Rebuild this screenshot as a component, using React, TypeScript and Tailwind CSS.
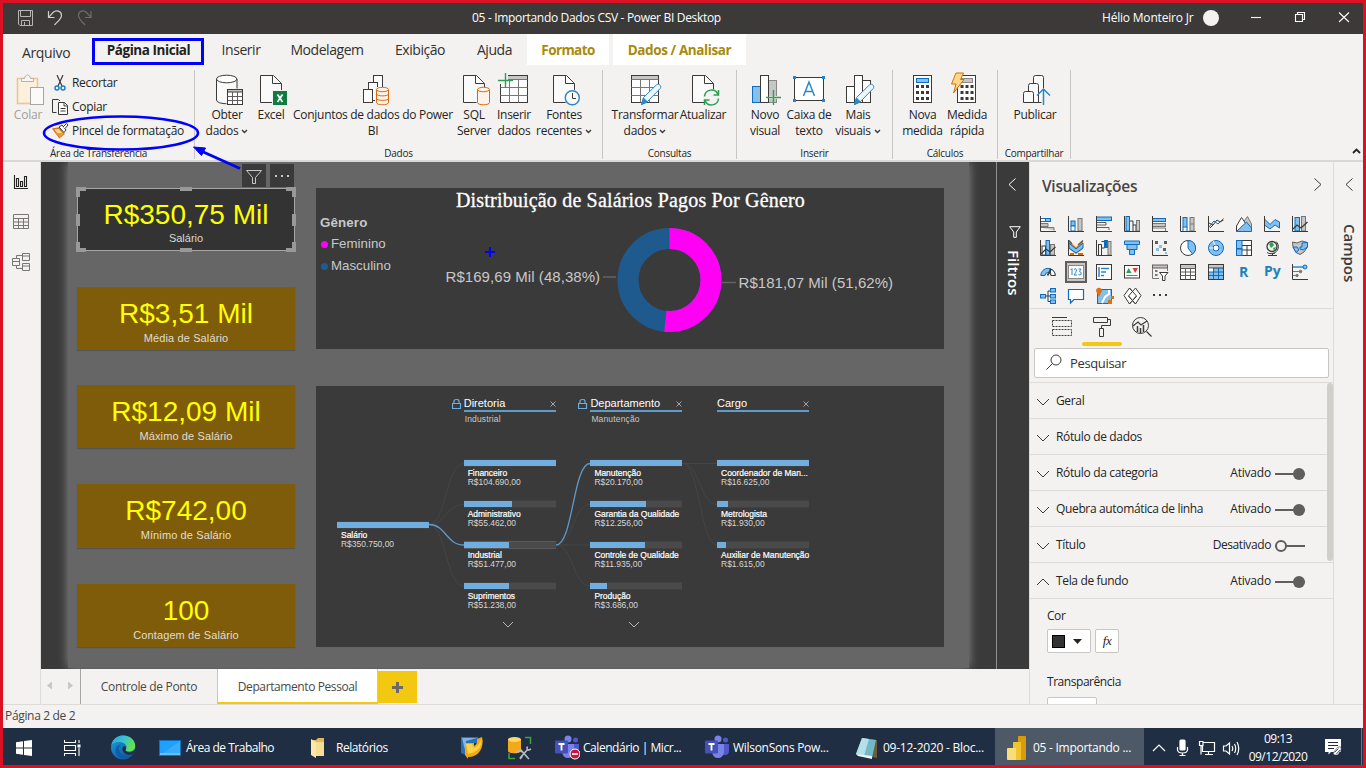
import React from "react";

type Kids = { children?: React.ReactNode };

const UI = "font-['Open_Sans','Noto_Sans',sans-serif]";
const ARIAL = "font-['Liberation_Sans',Arial,sans-serif]";

const K = "#3b3a39";
const B = "#0f6cbd";
const L = "#83c0ee";
const G = "#c8c6c4";

/* ---------- ribbon icons (32 x 32) ---------- */

const Ico = ({ children }: Kids) => (
  <svg width="32" height="32" viewBox="0 0 32 32" fill="none" stroke={K} strokeWidth="1" className="block shrink-0 overflow-visible">
    {children}
  </svg>
);

const Page = () => (
  <>
    <path d="M5.5 1.5H18.5L26.5 9.5V28.5H5.5Z" fill="#fafafa" />
    <path d="M17.5 1.5V9.5H26" fill="#fff" />
  </>
);

const OrangeCylinder = () => (
  <g stroke="#d86a0a" fill="#fdf3ea">
    <path d="M19.5 16V28.5C19.5 31.5 31.5 31.5 31.5 28.5V16" />
    <ellipse cx="25.5" cy="15.5" rx="6" ry="2.2" />
  </g>
);

const Pencil = () => (
  <g stroke="#2b88c8">
    <path d="M12.5 30.5L14.5 23.5L27.5 10.8C30 9 33 12 31.2 14.5L18.5 27.5Z" fill="#eef6fc" />
    <path d="M12.5 30.5L14.5 24L18.5 28Z" fill="#2b88c8" />
  </g>
);

const Table = () => (
  <>
    <rect x="2.5" y="1.5" width="27" height="27" fill="#fff" />
    <rect x="3" y="2" width="26" height="3.5" fill={G} stroke="none" />
    <path d="M2.5 5.5H29.5M2.5 13.5H29.5M2.5 21.5H29.5M11.5 5.5V28.5M20.5 5.5V28.5" stroke="#777" />
  </>
);

const PlusAt = ({ x, y }: { x: number; y: number }) => (
  <path d={`M${x - 7.5} ${y}H${x + 7.5}M${x} ${y - 7.5}V${y + 7.5}`} stroke="#2f9e55" strokeWidth="1.4" />
);

const Dots = ({ x }: { x: number }) => (
  <g fill={K} stroke="none">
    {[11, 17, 23].map((y) => [0, 5, 10].map((d) => <rect key={`${y}-${d}`} x={x + d} y={y} width="3" height="3" />))}
  </g>
);

const GetData = () => (
  <Ico>
    <path d="M5.500 5V26C5.500 31 26 31 26 26V5" fill="#fafafa" />
    <ellipse cx="15.700" cy="5" rx="10.200" ry="3.800" fill="#fff" />
    <rect x="15.500" y="14.500" width="17" height="17" fill="#f3f2f1" stroke="none" />
    <rect x="16.500" y="15.500" width="15" height="15" fill="#fff" />
    <rect x="16.500" y="15.500" width="15" height="2.500" fill={G} />
    <path d="M16.500 22.500H31.500M16.500 26.500H31.500M21.500 18V30.500M26.500 18V30.500" stroke="#605e5c" />
  </Ico>
);
const Excel = () => (
  <Ico>
    <Page />
    <rect x="17" y="16" width="15" height="15" fill="#f3f2f1" stroke="none" />
    <rect x="18" y="17" width="14" height="14" fill="#107c41" stroke="none" />
    <path d="M22.500 20.500L27.500 28M27.500 20.500L22.500 28" stroke="#fff" strokeWidth="1.800" />
  </Ico>
);
const Datasets = () => (
  <Ico>
    <g fill="#fff">
      <rect x="16.500" y="1.500" width="9" height="20" />
      <rect x="11.500" y="8.500" width="9" height="18" />
      <rect x="6.500" y="15.500" width="9" height="13" />
    </g>
    <path d="M18 13H33V32H18Z" fill="#f3f2f1" stroke="none" />
    <OrangeCylinder />
    <path d="M19.500 20C19.500 22.500 31.500 22.500 31.500 20M19.500 24.500C19.500 27 31.500 27 31.500 24.500" stroke="#d86a0a" />
  </Ico>
);
const Sql = () => (
  <Ico>
    <Page />
    <path d="M18.500 13H32V32H18.500Z" fill="#f3f2f1" stroke="none" />
    <OrangeCylinder />
  </Ico>
);
const EnterData = () => (
  <Ico>
    <Table />
    <path d="M-1 -2H10V10H-1Z" fill="#f3f2f1" stroke="none" />
    <PlusAt x={7.5} y={6.5} />
  </Ico>
);
const Recent = () => (
  <Ico>
    <Page />
    <circle cx="24.300" cy="23.700" r="8.300" fill="#f3f2f1" stroke="none" />
    <circle cx="24.300" cy="23.700" r="7" stroke="#2b88c8" strokeWidth="1.400" fill="#fafafa" />
    <path d="M24.500 19V24.500H28" />
  </Ico>
);
const Transform = () => (
  <Ico>
    <Table />
    <Pencil />
  </Ico>
);
const Refresh = () => (
  <Ico>
    <Page />
    <circle cx="24.500" cy="23.500" r="8.500" fill="#f3f2f1" stroke="none" />
    <g stroke="#2f9e55" strokeWidth="1.500">
      <path d="M17.500 22.500A7 7 0 0 1 31 20.500M31.500 16V21H26.500" />
      <path d="M31.500 24.500A7 7 0 0 1 18 26.500M17.500 31V26H22.500" />
    </g>
  </Ico>
);
const NewVisual = () => (
  <Ico>
    <rect x="19.500" y="6.500" width="8" height="22" fill={G} stroke="#8a8886" />
    <rect x="3.500" y="12.500" width="8" height="16" fill={L} stroke={B} />
    <rect x="11.500" y="1.500" width="8" height="27" fill="#fff" />
    <path d="M20 23.500H29" stroke="#f3f2f1" strokeWidth="3" />
    <PlusAt x={24.5} y={23.5} />
  </Ico>
);
const TextBox = () => (
  <Ico>
    <rect x="1.500" y="3.500" width="29" height="23" fill="#fff" />
    <path d="M10.500 22L16 8L21.500 22M12.500 17.500H19.500" stroke="#2b88c8" strokeWidth="1.500" />
    <g fill="#1f86d0" stroke="none">
      <rect x="0" y="2" width="3" height="3" />
      <rect x="29" y="2" width="3" height="3" />
      <rect x="0" y="25" width="3" height="3" />
      <rect x="29" y="25" width="3" height="3" />
    </g>
  </Ico>
);
const MoreVisuals = () => (
  <Ico>
    <g fill="#fff">
      <rect x="4.500" y="12.500" width="8" height="16" />
      <rect x="20.500" y="6.500" width="8" height="22" />
      <rect x="12.500" y="1.500" width="8" height="27" />
    </g>
    <Pencil />
  </Ico>
);
const NewMeasure = () => (
  <Ico>
    <rect x="6.500" y="1.500" width="18" height="27" fill="#fff" />
    <rect x="9.500" y="4.500" width="12" height="4" fill={L} stroke={B} />
    <Dots x={9} />
  </Ico>
);
const QuickMeasure = () => (
  <Ico>
    <rect x="6.500" y="1.500" width="18" height="27" fill="#fff" />
    <rect x="10.500" y="4.500" width="11" height="4" fill={G} stroke="#8a8886" />
    <Dots x={9.5} />
    <path d="M5 -1H12.500L9.500 5.500H13L2.500 19L5 10H0.500Z" fill="#ffd98a" stroke="#d86a0a" />
  </Ico>
);
const Publish = () => (
  <Ico>
    <g fill="#fafafa">
      <path d="M14.500 28.500V3.500Q14.500 1.500 16.500 1.500H22.500Q24.500 1.500 24.500 3.500V28.500Z" />
      <path d="M9.500 28.500V11.500Q9.500 9.500 11.500 9.500H17.500Q19.500 9.500 19.500 11.500V28.500Z" />
      <path d="M4.500 28.500V19.500Q4.500 17.500 6.500 17.500H12.500Q14.500 17.500 14.500 19.500V28.500Z" />
    </g>
    <path d="M22.500 14V32H27V14Z" fill="#f3f2f1" stroke="none" />
    <path d="M24.500 31V15M18 21.500L24.500 15L31 21.500" stroke="#2b88c8" strokeWidth="1.500" />
  </Ico>
);

/* ---------- ribbon ---------- */

const Caret = () => (
  <svg width="7" height="5" viewBox="0 0 7 5" className="ml-[3px] inline-block align-middle" fill="none" stroke="#3b3a39" strokeWidth="1.400">
    <path d="M1 1L3.500 3.500L6 1" />
  </svg>
);

const Btn = ({ w, icon, a, b, caret }: { w: string; icon: React.ReactNode; a: string; b?: string; caret?: boolean }) => (
  <div className={`${w} flex shrink-0 flex-col items-center`}>
    {icon}
    <div className="mt-px flex flex-col items-center text-[12px] leading-4 tracking-[-0.3px] whitespace-nowrap text-[#252423]">
      <span>{a}</span>
      {b && (
        <span>
          {b}
          {caret && <Caret />}
        </span>
      )}
    </div>
  </div>
);

const Group = ({ w, pad, label, children }: Kids & { w: string; pad: string; label: string }) => (
  <div className={`${w} flex h-[89px] flex-col border-r border-[#c8c6c4]`}>
    <div className={`flex h-[76px] shrink-0 ${pad}`}>{children}</div>
    <div className="text-center text-[10px] leading-[14px] tracking-[-0.25px] text-[#252423]">{label}</div>
  </div>
);

const Ribbon = () => (
  <div className="flex h-[128px] flex-col border-b-2 border-[#d8d8d8] bg-[#f3f2f1]">
    <div className="flex h-8 text-[14px] leading-[32px] tracking-[-0.45px] whitespace-nowrap text-[#323130]">
      <div className="w-[89px] pt-[3px] pl-[19px] tracking-[-0.350px]">Arquivo</div>
      <div className="mt-1 h-[27px] w-[112px] border-3 border-[#0000ff] pl-px text-center text-[13.500px] leading-[19px] font-bold tracking-[-0.450px] text-[#201f1e]">Página Inicial</div>
      <div className="w-[74px] text-center">Inserir</div>
      <div className="w-[98px] text-center">Modelagem</div>
      <div className="w-[88px] text-center">Exibição</div>
      <div className="w-[61px] text-center">Ajuda</div>
      <div className="ml-[2px] h-[31px] w-[82px] bg-white text-center text-[13.500px] font-bold tracking-[-0.600px] text-[#a88a0d]">Formato</div>
      <div className="ml-1 h-[31px] w-[133px] bg-white text-center text-[13.500px] font-bold tracking-[-0.400px] text-[#a88a0d]">Dados / Analisar</div>
    </div>
    <div className="flex pt-[4px]">
      <Group w="w-[192px]" pad="pt-[4px]" label="Área de Transferência">
        <div className="flex w-[50px] flex-col items-center">
          <svg width="32" height="32" viewBox="0 0 32 32" fill="none" className="block">
            <rect x="5.500" y="4.500" width="20" height="25" stroke="#ecc793" strokeWidth="1.600" fill="#faf0dc" />
            <path d="M9.500 7.500V4.500H12.500C13 0 18 0 18.500 4.500H21.500V7.500Z" fill="#f5f5f5" stroke="#b5b3b1" />
            <rect x="18.500" y="13.500" width="13" height="17" fill="#fafafa" stroke="#a8a6a4" />
          </svg>
          <span className="mt-px text-[12px] leading-4 tracking-[-0.200px] text-[#a19f9d]">Colar</span>
        </div>
        <div className="-ml-px flex flex-col text-[12px] leading-6 tracking-[-0.300px] whitespace-nowrap text-[#252423]">
          <div className="-mt-[3px] flex h-6 items-center">
            <svg width="17" height="16" viewBox="0 0 17 16" fill="none" className="mr-[3px]">
              <path d="M5 0L10 11M11 0L6 11" stroke={K} strokeWidth="1.200" />
              <circle cx="5" cy="13" r="2" stroke="#1a7fc4" strokeWidth="1.500" />
              <circle cx="11" cy="13" r="2" stroke="#1a7fc4" strokeWidth="1.500" />
            </svg>
            Recortar
          </div>
          <div className="flex h-6 items-center">
            <svg width="17" height="16" viewBox="0 0 17 16" fill="none" stroke={K} className="mr-[3px]">
              <path d="M4.500 13.500H0.500V0.500H6.500L8 2" />
              <path d="M6.500 3.500H12.500L15.500 6.500V15.500H6.500Z" fill="#fff" />
              <path d="M12 3.500V7H15.500M8.500 9.500H13.500M8.500 12H13.500" />
            </svg>
            Copiar
          </div>
          <div className="flex h-6 items-center">
            <svg width="17" height="16" viewBox="0 0 17 16" fill="none" className="mr-[3px]">
              <path d="M1 6L7 5L12 11L7.500 14.500Z" fill="#fbd49a" stroke="#d8780f" strokeWidth="1.300" />
              <path d="M4 10L8 14L12 11L9 10Z" fill="#ee9a2c" />
              <path d="M7 4L10 2L14 7L12 9.500Z" fill="#fff" stroke={K} />
              <path d="M11 4L14.500 0.500L16 2L13 5.500" fill="#fff" stroke={K} />
            </svg>
            Pincel de formatação
          </div>
        </div>
      </Group>
      <Group w="w-[408px]" pad="pt-[4px] pl-[6px]" label="Dados">
        <Btn w="w-[52px]" icon={<GetData />} a="Obter" b="dados" caret />
        <Btn w="w-[36px]" icon={<Excel />} a="Excel" />
        <Btn w="w-[168px]" icon={<Datasets />} a="Conjuntos de dados do Power" b="BI" />
        <Btn w="w-[34px]" icon={<Sql />} a="SQL" b="Server" />
        <Btn w="w-[46px]" icon={<EnterData />} a="Inserir" b="dados" />
        <Btn w="w-[54px]" icon={<Recent />} a="Fontes" b="recentes" caret />
      </Group>
      <Group w="w-[134px]" pad="pt-[4px] pl-[9px]" label="Consultas">
        <Btn w="w-[66px]" icon={<Transform />} a="Transformar" b="dados" caret />
        <Btn w="w-[50px]" icon={<Refresh />} a="Atualizar" />
      </Group>
      <Group w="w-[156px]" pad="pt-[4px] pl-[6px]" label="Inserir">
        <Btn w="w-[44px]" icon={<NewVisual />} a="Novo" b="visual" />
        <Btn w="w-[44px]" icon={<TextBox />} a="Caixa de" b="texto" />
        <Btn w="w-[54px]" icon={<MoreVisuals />} a="Mais" b="visuais" caret />
      </Group>
      <Group w="w-[105px]" pad="pt-[4px] pl-[7px]" label="Cálculos">
        <Btn w="w-[45px]" icon={<NewMeasure />} a="Nova" b="medida" />
        <Btn w="w-[44px]" icon={<QuickMeasure />} a="Medida" b="rápida" />
      </Group>
      <Group w="w-[73px]" pad="pt-[4px] pl-[15px]" label="Compartilhar">
        <Btn w="w-[44px]" icon={<Publish />} a="Publicar" />
      </Group>
      <div className="flex grow items-end justify-end pr-[2px] pb-[5px]">
        <svg width="9" height="6" viewBox="0 0 9 6" fill="none" stroke="#252423" strokeWidth="1.800">
          <path d="M1 5L4.500 1.500L8 5" />
        </svg>
      </div>
    </div>
  </div>
);

const TitleBar = () => (
  <div className="flex h-[31px] items-center bg-[#3b3a38] pb-[2px] text-[12px] text-white">
    <svg width="90" height="31" viewBox="3 3 90 31" fill="none" className="shrink-0">
      <g stroke="#b8b6b4">
        <path d="M18.500 11.500H32.500V26.500H20L18.500 25Z" />
        <path d="M20.500 11.500V17.500H30.500V11.500M21.500 26V21.500H29.500V26M24.500 23V26" />
      </g>
      <path d="M48.500 12V18.500H54.500M48.800 18.200L53 13.500C56 10.500 61.500 12 61.500 16.500C61.500 20 57 23 54.500 26" stroke="#d0cecc" strokeWidth="1.200" />
      <path d="M91 12V18.500H85M90.800 18.200L86.500 13.500C83.500 10.500 78.500 12 78.500 16.500C78.500 20 82.500 23 85 26" stroke="#6e6d6b" strokeWidth="1.200" />
    </svg>
    <div className="w-[1009px] pl-[379px] tracking-[-0.320px] whitespace-nowrap">05 - Importando Dados CSV - Power BI Desktop</div>
    <div className="w-[92px] tracking-[-0.200px] whitespace-nowrap">Hélio Monteiro Jr</div>
    <div className="ml-[9px] h-4 w-4 rounded-full bg-[#f3f2f1]" />
    <svg width="144" height="31" viewBox="1219 3 144 31" fill="none" stroke="#fff" strokeWidth="1.100" className="shrink-0">
      <path d="M1251 18.500H1261" />
      <path d="M1295.500 15.500H1302.500V22.500H1295.500ZM1297.500 15.500V13.500H1304.500V20.500H1302.500" />
      <path d="M1339 13.500L1349 23M1349 13.500L1339 23" />
    </svg>
  </div>
);

/* ---------- report canvas ---------- */

const Card = ({ h, value, label }: { h: string; value: string; label: string }) => (
  <div className={`${h} flex w-[218px] flex-col items-center bg-[#7f5c09] whitespace-nowrap shadow-[0_1px_1px_rgba(60,60,60,.4)]`}>
    <div className="pt-[10px] text-[28px] leading-[34px] text-[#ffff00]">{value}</div>
    <div className="text-[11px] leading-[14px] tracking-[0.120px] text-[#e0dcd2]">{label}</div>
  </div>
);

const SelectedCard = () => (
  <div className="relative flex h-[63px] w-[218px] flex-col items-center border border-[#a6a6a6] bg-[#333333] whitespace-nowrap">
    <div className="pt-[9px] text-[28px] leading-[33px] text-[#ffff00]">R$350,75 Mil</div>
    <div className="text-[11px] leading-[14px] text-[#d8d8d8]">Salário</div>
    <svg width="220" height="65" viewBox="0 0 220 65" className="absolute -top-[2px] -left-[2px]" fill="#999">
      <path d="M0 0H10V4H4V10H0ZM220 0H210V4H216V10H220ZM0 65H10V61H4V55H0ZM220 65H210V61H216V55H220Z" />
      <path d="M104 0H116V4H104ZM104 61H116V65H104ZM0 27H4V39H0ZM216 27H220V39H216Z" />
    </svg>
    <div className="absolute top-[-25px] left-[164px] flex gap-1">
      <div className="h-[23px] w-6 bg-[#3a3a3a]">
        <svg width="24" height="23" viewBox="0 0 24 23" fill="none" stroke="#c8c8c8">
          <path d="M4.500 6.500H19.500L13.500 13.500V19.500H10.500V13.500Z" />
        </svg>
      </div>
      <div className="h-[23px] w-6 bg-[#3a3a3a]">
        <svg width="24" height="23" viewBox="0 0 24 23" fill="#c8c8c8">
          <path d="M5 11h2v2h-2zM11 11h2v2h-2zM17 11h2v2h-2z" />
        </svg>
      </div>
    </div>
  </div>
);

const DonutVisual = () => (
  <div className="relative h-[161px] w-[628px] bg-[#3a3a3a] text-[#c8c8c8]">
    <div className="pl-px text-center font-['Liberation_Serif',serif] text-[20px] leading-[24px] tracking-[0.180px] whitespace-nowrap text-white [-webkit-text-stroke:0.3px_white]">Distribuição de Salários Pagos Por Gênero</div>
    <div className="flex flex-col pl-[4px] text-[13.300px] leading-[22px]">
      <div className="font-bold tracking-[0.150px]">Gênero</div>
      <div className="-mt-px flex items-center pl-px">
        <i className="mr-[3px] h-[7px] w-[7px] rounded-full bg-[#ff00f5]" />
        Feminino
      </div>
      <div className="flex items-center pl-px">
        <i className="mr-[3px] h-[7px] w-[7px] rounded-full bg-[#1f5a8f]" />
        Masculino
      </div>
    </div>
    <svg width="628" height="161" viewBox="316 188 628 161" className="absolute top-0 left-0" fill="none">
      <g transform="rotate(-90 669.500 280)" strokeWidth="21">
        <circle cx="669.500" cy="280" r="41.500" stroke="#1f5a8f" />
        <circle cx="669.500" cy="280" r="41.500" stroke="#ff00f5" pathLength="100" strokeDasharray="51.620 48.380" />
      </g>
      <path d="M603 277H616M722 282.500H736" stroke="#636363" strokeWidth="1.500" />
      <path d="M485 252H495M490 247V257" stroke="#0000ff" strokeWidth="2" />
    </svg>
    <span className="absolute top-[80px] left-[129.500px] text-[15px] leading-[18px] tracking-[0.060px] whitespace-nowrap">R$169,69 Mil (48,38%)</span>
    <span className="absolute top-[86px] left-[422.500px] text-[15px] leading-[18px] tracking-[0.060px] whitespace-nowrap">R$181,07 Mil (51,62%)</span>
  </div>
);

const Node = ({ name, value, pct, hot }: { name: string; value: string; pct: number; hot?: boolean }) => (
  <div className="flex h-[41px] flex-col whitespace-nowrap">
    <div className={`h-[8px] w-[92px] border-y ${hot ? "border-[#5a5a5a]" : "border-[#414141]"} bg-[#4a4a4a]`}>
      <div className="h-full bg-[#70aee0]" style={{ width: `${pct}%` }} />
    </div>
    <div className="pl-[4px] text-[8.500px] leading-[9px] tracking-[-0.030px] text-white">
      <div className="pt-[2px] [-webkit-text-stroke:0.2px_white]">{name}</div>
      <div className="text-[#d6d6d6]">{value}</div>
    </div>
  </div>
);

const Lock = () => (
  <svg width="10" height="12" viewBox="0 0 10 12" fill="none" stroke="#70aee0" className="absolute top-[1px] -left-[12px]">
    <path d="M.5 5.500H8.500V10.500H.5ZM2 5.500V3Q2 1.500 4.500 1.500Q7 1.500 7 3V5.500" strokeWidth="1.200" />
  </svg>
);

const TreeHead = ({ title, sub, lock }: { title: string; sub?: string; lock?: boolean }) => (
  <div className="relative h-[62px] whitespace-nowrap">
    {lock && <Lock />}
    <div className="flex h-[15px] items-center justify-between border-b-2 border-[#5e9ccc] text-[11px] leading-[13px] text-white">
      <span>{title}</span>
      <svg width="6" height="6" viewBox="0 0 6 6" stroke="#b0b0b0" strokeWidth=".9">
        <path d="M.5 .5L5.500 5.500M5.500 .5L.5 5.500" />
      </svg>
    </div>
    <div className="mt-[3px] pl-px text-[8.500px] leading-[9px] tracking-[0.150px] text-[#c8c8c8]">{sub}</div>
  </div>
);

const Down = () => (
  <svg width="12" height="7" viewBox="0 0 12 7" fill="none" stroke="#b8b8b8" className="-mt-[2px] ml-[38px]">
    <path d="M1 1L6 6L11 1" />
  </svg>
);

const TreeVisual = () => (
  <div className="relative mt-[37px] h-[261px] w-[628px] bg-[#3a3a3a]">
    <svg width="628" height="261" viewBox="316 386 628 261" className="absolute top-0 left-0" fill="none">
      <g stroke="#454545">
        <path d="M429 524.500C446 524.500 446 463.500 464 463.500M429 524.500C446 524.500 446 504.500 464 504.500M429 524.500C446 524.500 446 586 464 586" />
        <path d="M556 545C573 545 573 504.500 590 504.500M556 545H590M556 545C573 545 573 586 590 586" />
        <path d="M682 463.500H717M682 463.500C700 463.500 700 504.500 717 504.500M682 463.500C700 463.500 700 545 717 545" />
      </g>
      <path d="M429 524.500C446 524.500 446 545 464 545M556 545C573 545 573 463.500 590 463.500" stroke="#5f99c8" strokeWidth="1.300" />
    </svg>
    <div className="relative flex gap-[34.700px] pt-[11px] pl-[21px]">
      <div className="w-[92px] pt-[123.500px]">
        <Node name="Salário" value="R$350.750,00" pct={100} />
      </div>
      <div className="w-[92px]">
        <TreeHead title="Diretoria" sub="Industrial" lock />
        <Node name="Financeiro" value="R$104.690,00" pct={100} />
        <Node name="Administrativo" value="R$55.462,00" pct={53} />
        <Node name="Industrial" value="R$51.477,00" pct={49} hot />
        <Node name="Suprimentos" value="R$51.238,00" pct={49} />
        <Down />
      </div>
      <div className="w-[92px]">
        <TreeHead title="Departamento" sub="Manutenção" lock />
        <Node name="Manutenção" value="R$20.170,00" pct={100} />
        <Node name="Garantia da Qualidade" value="R$12.256,00" pct={61} />
        <Node name="Controle de Qualidade" value="R$11.935,00" pct={59} />
        <Node name="Produção" value="R$3.686,00" pct={18} />
        <Down />
      </div>
      <div className="w-[92px]">
        <TreeHead title="Cargo" />
        <Node name="Coordenador de Man..." value="R$16.625,00" pct={100} />
        <Node name="Metrologista" value="R$1.930,00" pct={12} />
        <Node name="Auxiliar de Manutenção" value="R$1.615,00" pct={10} />
      </div>
    </div>
  </div>
);

const Canvas = () => (
  <div className={`${ARIAL} flex h-[507px] w-[955px] overflow-hidden bg-[#3a3a3a] pl-[27px]`}>
    <div className="flex h-[506px] w-[901px] bg-[#666666] pt-[26px] pl-[9px] shadow-[0_0_10px_#8a8a8a]">
      <div className="flex w-[239px] flex-col">
        <SelectedCard />
        <div className="flex flex-col gap-9 pt-9">
          <Card h="h-[63px]" value="R$3,51 Mil" label="Média de Salário" />
          <Card h="-mt-px h-[63px]" value="R$12,09 Mil" label="Máximo de Salário" />
          <Card h="h-[64px]" value="R$742,00" label="Mínimo de Salário" />
          <Card h="h-[63px]" value="100" label="Contagem de Salário" />
        </div>
      </div>
      <div>
        <DonutVisual />
        <TreeVisual />
      </div>
    </div>
  </div>
);

const LeftRail = () => (
  <div className="h-[542px] w-[38px] border-r border-[#dddbd9] bg-[#f3f2f1]">
    <svg width="36" height="120" viewBox="3 162 36 120" fill="none">
      <g stroke="#252423" strokeWidth="1.100">
        <path d="M14.500 175V188.500H28" />
        <path d="M16.500 178.500H18.500V186.500H16.500ZM20.500 181.500H22.500V186.500H20.500ZM24.500 176.500H26.500V186.500H24.500Z" />
      </g>
      <g stroke="#797775">
        <path d="M13.500 214.500H28.500V228.500H13.500ZM13.500 218.500H28.500M13.500 222H28.500M13.500 225.500H28.500M18.500 218V228M23.500 218V228" />
        <path d="M12.500 258.500H19.500V265.500H12.500ZM12.500 261.500H19.500M22.500 253.500H29.500V260.500H22.500ZM22.500 256H29.500M22.500 263.500H29.500V270.500H22.500ZM22.500 266H29.500M16.500 258V255.500H22.500M16.500 266V268.500H22.500" />
      </g>
    </svg>
  </div>
);

const PageTabs = () => (
  <div className="flex h-[35px] bg-[#f3f2f1] text-[12px] leading-[36px] tracking-[-0.400px] text-[#4a4846]">
    <div className="flex w-10 items-center justify-between border-r border-[#a8a6a4] pr-[7px] pb-[2px] pl-[6px]">
      <svg width="5" height="9" viewBox="0 0 5 8" fill="#c8c6c4"><path d="M5 0V8L0 4Z" /></svg>
      <svg width="5" height="9" viewBox="0 0 5 8" fill="#c8c6c4"><path d="M0 0V8L5 4Z" /></svg>
    </div>
    <div className="w-[137px] border-r border-[#c8c6c4] text-center tracking-[-0.330px]">Controle de Ponto</div>
    <div className="w-[160px] border-r border-b-2 border-r-[#c8c6c4] border-b-[#f2c811] bg-white text-center">Departamento Pessoal</div>
    <div className="mt-[2px] flex h-8 w-[39px] items-center justify-center bg-[#f2c811]">
      <svg width="11" height="11" viewBox="0 0 11 11" stroke="#6b6a68" strokeWidth="3"><path d="M0 5.500H11M5.500 0V11" /></svg>
    </div>
  </div>
);

const FilterPane = () => (
  <div className="flex h-[507px] w-[33px] flex-col items-center border-l border-[#8f8f8f] bg-[#3a3a3a] pt-[16px] text-white">
    <svg width="8" height="13" viewBox="0 0 8 13" fill="none" stroke="#fff" className="-ml-[2px]"><path d="M7.500 .5L1 6.500L7.500 12.500" /></svg>
    <svg width="12" height="12" viewBox="0 0 12 12" fill="none" stroke="#fff" className="mt-[35px] ml-[4px]"><path d="M.7 .7H11.300L7.300 6V11.300H4.700V6Z" /></svg>
    <div className="mt-[12px] ml-[2px] text-[15px] leading-4 font-semibold tracking-[0.050px] [writing-mode:vertical-rl]">Filtros</div>
  </div>
);

/* ---------- visualizations pane ---------- */

const V = ({ children }: Kids) => (
  <svg width="16" height="16" viewBox="0 0 16 16" fill="none" stroke={K} className="block overflow-visible">
    {children}
  </svg>
);
const Axes = () => <path d="M.5 0V15.500H16" />;

const vizIcons: React.ReactNode[] = [
  <V><rect x=".5" y="2.500" width="5" height="3" fill="#fff" stroke={B} /><rect x="5.500" y="2.500" width="5" height="3" fill={L} stroke={B} /><path d="M.5 7.500H8V10.500H.5M.5 11.500H14V14.500" fill={G} stroke="#797775" /><Axes /></V>,
  <V><rect x="3" y="5" width="4" height="5" fill={L} stroke={B} /><rect x="3" y="10" width="4" height="5" fill="#fff" stroke={B} /><rect x="10" y="2.500" width="4" height="12.500" fill={G} stroke="#797775" /><Axes /></V>,
  <V><rect x=".5" y="1" width="15" height="3.500" fill={L} stroke={B} /><path d="M.5 6.500H10V9H.5M.5 11.500H13V14" stroke="#605e5c" /><Axes /></V>,
  <V><rect x="2" y=".5" width="3.500" height="14.500" fill={L} stroke={B} /><path d="M6 5H9V15M9 9H12V15" /><rect x="12.500" y="4.500" width="3" height="10.500" fill={G} stroke="#797775" /><Axes /></V>,
  <V><rect x=".5" y="2.500" width="13" height="3" fill={L} stroke={B} /><rect x=".5" y="7.500" width="13" height="3" fill={G} stroke="#797775" /><path d="M.5 12H13.500V15" stroke="#797775" /><Axes /></V>,
  <V><rect x="3" y="1.500" width="4" height="9.500" fill={L} stroke={B} /><path d="M3 11V15M7 11V15" stroke={B} /><rect x="10" y="1.500" width="4" height="13.500" fill={G} stroke="#797775" /><path d="M10 8H14" stroke="#797775" /><Axes /></V>,
  <V><path d="M1 11L6 5L10 8L15.500 2.500" stroke={B} /><path d="M1 7L5 9L9 4L12 6L15.500 4M2 12L6 8" /><Axes /></V>,
  <V><path d="M6 8L11.500 .5L15.500 8V15H6Z" fill={G} stroke="#797775" /><path d="M.5 15V10L5.500 1.500L10 8L5 15Z" fill="#fff" /><path d="M.5 15.500L10.500 6L15.500 12V15.500Z" fill={L} stroke={B} /></V>,
  <V><path d="M.5 3L6 8.500L11 3.500L15.500 6V12L11 9L6 13L.5 9Z" fill={L} stroke={B} /><Axes /></V>,
  <V><rect x="3" y="1.500" width="4.500" height="13.500" fill={L} stroke={B} /><rect x="9.500" y=".5" width="4" height="14.500" fill={G} stroke="#797775" /><path d="M1 13L5 9L9 12L15.500 6" strokeWidth="1.300" /><Axes /></V>,

  <V><rect x="2" y="6" width="3.500" height="9" fill="#fff" /><rect x="6" y=".5" width="3.500" height="14.500" fill={L} stroke={B} /><rect x="10.500" y="4.500" width="4" height="10.500" fill={G} stroke="#797775" /><path d="M1 14L6 9L10 12L15.500 7" strokeWidth="1.200" /><Axes /></V>,
  <V><path d="M1 1L8 7L15 1V9L8 14L1 9Z" fill="#e58a22" stroke="none" /><path d="M1 3L8 9L15 3V8L8 13L1 8Z" fill={L} stroke={B} /><path d="M1 .5L4 4M15 .5L10 5" stroke="#605e5c" strokeWidth="1.500" /><path d="M2 14H6M10 14H15" stroke="#d86a0a" strokeWidth="2" /><Axes /></V>,
  <V><path d="M2.500 4.500H5.500V15M2.500 4V15M5.500 1.500H8.500V8H5.500" /><rect x="8.500" y=".5" width="3" height="7" fill={B} stroke={B} /><rect x="12" y="1.500" width="3" height="13.500" fill={G} stroke="#797775" /><Axes /></V>,
  <V><path d="M.5 1H15.500V4.500H.5Z" fill={L} stroke={B} /><path d="M3 4.500H13V9.500H3Z" fill={L} stroke={B} /><path d="M5.500 9.500H10.500V14.500H5.500Z" fill={L} stroke={B} /></V>,
  <V><g stroke="none"><path d="M3 1h3v3h-3zM11 8h3v3h-3zM12 1h3v3h-3z" fill="#605e5c" /><path d="M7 5h3v3h-3zM4 8h3v3h-3zM13 12h2v2h-2z" fill={L} /></g><Axes /></V>,
  <V><circle cx="8" cy="8" r="7.500" fill="#fff" /><path d="M8 .5A7.500 7.500 0 0 1 12.500 14L8 8Z" fill={L} stroke={B} /></V>,
  <V><circle cx="8" cy="8" r="5.200" stroke={L} strokeWidth="4.500" /><circle cx="8" cy="8" r="7.500" stroke={B} /><circle cx="8" cy="8" r="3" fill="#fff" stroke={B} /><path d="M5 .8L7 5M1 8H5" stroke="#fff" /></V>,
  <V><rect x=".5" y=".5" width="15" height="15" fill="#fff" /><rect x=".5" y=".5" width="5.500" height="8" fill={L} stroke={B} /><rect x=".5" y="9" width="5.500" height="6.500" fill={L} stroke={B} /><path d="M6 5.500H15.500M6 10H15.500M11 5.500V15" /></V>,
  <V><circle cx="8" cy="6.500" r="5" fill="#e8f3ea" strokeWidth="1.300" /><path d="M5 4L8 2L10 5L7 8ZM9 8L12 7L10 11Z" fill="#2f9e55" stroke="none" /><path d="M12 1.500C16 5 15 12 8.500 13.500V15.500M3 12.500C5 14 9 14 11 13M4 15.500H13" /></V>,
  <V><path d="M.5 2L5 3L10 1L15.500 2.500V7L12 12L8 14.500L4 12.500L1 7Z" fill={G} stroke="#605e5c" /><path d="M8 7H10V3L15.500 2.500V7L11 10L8 9ZM1 7H5L7 10L4 12.500Z" fill={L} stroke={B} /></V>,

  <V><path d="M.8 11.500A7.200 7.200 0 0 1 15.200 11.500H11A3 3 0 0 0 5 11.500Z" fill={L} stroke={B} /><path d="M10 5A7 7 0 0 1 15.200 11.500H11Z" fill="#fff" /><path d="M7.500 11.500L11 5" strokeWidth="1.600" /></V>,
  <V><rect x="-2" y="-2" width="20" height="20" stroke="#605e5c" strokeWidth="2" fill="#c8c6c4" /><rect x=".5" y="1.500" width="15" height="13" fill="#fff" stroke="#8a8886" /><path d="M2.500 6L4 4.500V11M6 5.500Q8 3.500 8.500 6Q8.500 8 6 11H9M10.500 5H13L11.500 7.500Q14 8 13 10.500Q12 11.500 10.500 10.500" stroke="#2b88c8" /></V>,
  <V><rect x=".5" y=".5" width="15" height="15" fill="#fff" /><path d="M3 3V13" stroke={B} strokeWidth="1.300" /><path d="M5 4.500H13M5 8H10M5 11.500H8" stroke="#2b88c8" strokeWidth="1.700" /></V>,
  <V><rect x=".5" y="1.500" width="15" height="12.500" fill="#fff" /><path d="M2 9L4.700 4L7.500 9Z" fill="#2f9e55" stroke="none" /><path d="M8.500 4H14L11.200 9Z" fill="#e03a3a" stroke="none" /><path d="M2.500 11.500H13.500" stroke="#797775" /></V>,
  <V><rect x=".5" y="1" width="15" height="3" fill={G} stroke="#605e5c" /><path d="M.5 4V14.500H7M15.500 4V7" stroke="#797775" /><path d="M3 7H5.500M3 11H5.500" strokeWidth="2" stroke="#797775" /><path d="M7.500 8.500H16L13 12V16.500H10.500V12Z" fill="#fff" /></V>,
  <V><rect x=".5" y=".5" width="15" height="15" fill="#fff" /><rect x="1" y="1" width="14" height="3" fill={G} stroke="none" /><path d="M.5 4.500H15.500M.5 8H15.500M.5 11.500H15.500M5.500 4.500V15.500M10.500 4.500V15.500" stroke="#605e5c" /></V>,
  <V><rect x=".5" y=".5" width="15" height="15" fill={L} stroke={B} /><rect x=".5" y=".5" width="15" height="3.500" fill={G} stroke={K} /><path d="M1 4.500H5V8H1Z" fill="#fff" stroke="none" /><path d="M5.500 4V15.500M10.500 4V15.500M.5 8H15.500M.5 11.500H15.500" stroke={B} /><path d="M15.500 .5V15.500H.5V.5" /></V>,
  <span className="block pl-[3px] text-[14px] leading-4 font-bold text-[#2080bd]">R</span>,
  <span className="-mt-px block text-[14px] leading-4 font-bold text-[#2080bd]">Py</span>,
  <V><path d="M.5 0V15.500H16" /><path d="M1 3H11" stroke="#2b88c8" strokeWidth="1.500" /><circle cx="13" cy="3" r="2" fill={L} stroke={B} /><path d="M1 7.500H7M1 11.500H4" stroke="#797775" /><circle cx="8.500" cy="7.500" r="1.300" fill="#797775" stroke="#797775" /><circle cx="5" cy="11.500" r="1.200" fill="#797775" stroke="#797775" /></V>,

  <V><path d="M5 8H10M8 3H10M8 3V13.500H10" stroke={K} /><g fill={L} stroke={B}><rect x=".5" y="6.500" width="5" height="3.500" /><rect x="10.500" y=".5" width="5" height="3.500" /><rect x="10.500" y="6.500" width="5" height="3.500" /><rect x="10.500" y="12" width="5" height="3.500" /></g></V>,
  <V><path d="M.5 1.500H15.500V11.500H6L2.500 15V11.500H.5Z" fill="#fff" stroke={B} strokeWidth="1.200" /></V>,
  <V><rect x="1.500" y="1.500" width="14" height="14" fill={L} stroke={B} /><path d="M6 15L9 9L13 6V2" stroke="#fff" strokeWidth="2" /><path d="M0 3C0-1.500 6-1.500 6 3L3 9Z" fill="#e0700f" stroke="none" /><path d="M12 12h4v4h-4zM15 8h3v3h-3z" fill="#e0700f" stroke="none" /></V>,
  <V><path d="M5.500 0H11.500L17 7.500L11.500 16H5.500L0 7.500Z" fill="#fff" stroke="none" /><path d="M8.500 3.500L5.500 0L0 7.500L5.500 16L8.500 12.500L11.500 16L17 7.500L11.500 0L4.500 8L8.500 12.500L12.500 8L5.500 0M11.500 16L4.500 8M5.500 16L12.500 8" /></V>,
  <svg width="16" height="16" viewBox="0 0 16 16" fill={K} className="block"><path d="M1 6h2v2H1zM7 6h2v2H7zM13 6h2v2h-2z" /></svg>,
];

const Toggle = ({ on }: { on: boolean }) => (
  <svg width="30" height="12" viewBox="0 0 30 12" className="relative top-[1px] ml-[4px]">
    <path d="M0 6H30" stroke="#605e5c" strokeWidth="2" />
    {on ? <circle cx="24" cy="6" r="6" fill="#605e5c" /> : <circle cx="6" cy="6" r="5" fill="#f3f2f1" stroke="#605e5c" strokeWidth="2" />}
  </svg>
);

const Row = ({ label, on, up }: { label: string; on?: boolean; up?: boolean }) => (
  <div className="flex h-9 items-center border-t border-[#dddbd9] pt-px pr-[28px] pl-[6px] text-[12px] tracking-[-0.350px] whitespace-nowrap text-[#252423]">
    <svg width="14" height="8" viewBox="0 0 14 8" fill="none" stroke={K} className="relative top-[1px] mr-[6px]">
      <path d={up ? "M1 7L7 1L13 7" : "M1 1L7 7L13 1"} />
    </svg>
    <span className="grow">{label}</span>
    {on !== undefined && (
      <>
        <span className={on ? "tracking-[-0.200px]" : "tracking-[-0.400px]"}>{on ? "Ativado" : "Desativado"}</span>
        <Toggle on={on} />
      </>
    )}
  </div>
);

const VisualPane = () => (
  <div className="relative flex h-[542px] w-[305px] flex-col overflow-hidden border-x border-[#dddbd9] bg-[#f3f2f1]">
    <div className="flex h-[54px] shrink-0 items-center justify-between pr-[11px] pl-[12px]">
      <span className="relative top-[-2px] text-[15.500px] font-semibold tracking-[-0.300px] text-[#484644]">Visualizações</span>
      <svg width="8" height="13" viewBox="0 0 8 13" fill="none" stroke={K} className="relative top-[-5px]"><path d="M.5 .5L7 6.500L.5 12.500" /></svg>
    </div>
    <div className="grid h-[92px] shrink-0 grid-cols-[repeat(10,28px)] content-start gap-y-2 pl-[10px]">
      {vizIcons.map((icon, i) => (
        <div key={i} className="h-4 w-4">{icon}</div>
      ))}
    </div>
    <div className="flex h-[37px] shrink-0 border-t border-[#dddbd9] pl-[12px]">
      <div className="flex h-[37px] w-10 flex-col items-center pt-[8px]">
        <svg width="20" height="20" viewBox="0 0 20 20" fill="none" stroke={K}>
          <path d="M0 .5H15" />
          <path d="M.5 3.500H19.500V9.500H.5ZM.5 12.500H19.500V18.500H.5Z" strokeDasharray="2 1" />
        </svg>
      </div>
      <div className="flex h-[37px] w-10 flex-col items-center justify-between pt-[8px]">
        <svg width="20" height="20" viewBox="0 0 20 20" fill="none" stroke={K}>
          <path d="M1.500 .5H15.500V5.500H1.500ZM15.500 2.500H18.500V8.500H9.500V11M7.500 11.500H11.500V19.500H7.500Z" />
        </svg>
        <div className="h-1 w-10 rounded-full bg-[#f2c811]" />
      </div>
      <div className="flex h-[37px] w-10 flex-col items-center pt-[8px]">
        <svg width="20" height="20" viewBox="0 0 20 20" fill="none" stroke={K}>
          <circle cx="8.500" cy="8.500" r="8" />
          <path d="M14.500 14.500L19.500 19.500M1 9L6 5L9 8L15 4" strokeWidth="1.200" />
          <path d="M5.500 9V15M8.500 11V16M11.500 8V15" strokeWidth="1.500" />
        </svg>
      </div>
    </div>
    <div className="mx-[4px] mt-[3px] flex h-[30px] w-[295px] shrink-0 items-center rounded-[2px] border border-[#c8c6c4] bg-white pl-[11px]">
      <svg width="16" height="16" viewBox="0 0 16 16" fill="none" stroke={K} className="relative top-[-1px] mr-[8px]">
        <circle cx="10" cy="6" r="5" />
        <path d="M6.500 9.500L.5 15.500" />
      </svg>
      <span className="pt-px text-[13px] tracking-[-0.350px] text-[#323130]">Pesquisar</span>
    </div>
    <div className="mt-[4px] flex shrink-0 flex-col">
      <Row label="Geral" />
      <Row label="Rótulo de dados" />
      <Row label="Rótulo da categoria" on />
      <Row label="Quebra automática de linha" on />
      <Row label="Título" on={false} />
      <Row label="Tela de fundo" on up />
      <div className="flex flex-col border-t border-[#dddbd9] pl-[17px] text-[12px] leading-[16px] tracking-[-0.450px] text-[#252423]">
        <span className="mt-[9px]">Cor</span>
        <div className="mt-[5px] flex gap-[4px]">
          <div className="flex h-6 w-11 items-center rounded-[2px] border border-[#c8c6c4] bg-white pl-[4px]">
            <div className="mr-[8px] h-[13px] w-[13px] border border-black bg-[#333]" />
            <svg width="9" height="5" viewBox="0 0 9 5" fill="#252423"><path d="M0 0H9L4.500 5Z" /></svg>
          </div>
          <div className="flex h-6 w-6 items-center justify-center rounded-[2px] border border-[#c8c6c4] bg-white font-['Liberation_Serif',serif] text-[13px] italic">fx</div>
        </div>
        <span className="mt-[21px]">Transparência</span>
        <div className="mt-[7px] h-5 w-[50px] rounded-[2px] border border-[#c8c6c4] bg-white" />
      </div>
    </div>
    <div className="absolute top-[221px] right-0 h-[178px] w-[6px] rounded-full bg-[#d0cfcc]" />
  </div>
);

const FieldsPane = () => (
  <div className="flex h-[542px] w-[29px] flex-col items-center bg-[#f3f2f1] pt-[16px]">
    <svg width="8" height="13" viewBox="0 0 8 13" fill="none" stroke={K} className="ml-px"><path d="M7.500 .5L1 6.500L7.500 12.500" /></svg>
    <div className="mt-[33px] ml-[2px] text-[15px] leading-4 font-semibold text-[#3b3a39] [writing-mode:vertical-rl]">Campos</div>
  </div>
);

/* ---------- taskbar ---------- */

const Teams = ({ busy }: { busy?: boolean }) => (
  <svg width="25" height="25" viewBox="0 0 25 25" className="shrink-0">
    <circle cx="13" cy="4" r="3.500" fill="#7b83eb" />
    <circle cx="20.500" cy="5" r="2.500" fill="#5059c9" />
    <path d="M15 9H24V16Q24 20 20 20H15Z" fill="#5059c9" />
    <path d="M7 9H19V17Q18 23 13 23Q8 23 7 17Z" fill="#7b83eb" />
    <rect y="5.500" width="13" height="13" rx="1" fill="#4650b5" />
    <path d="M3.500 9H9.500M6.500 9V15.500" stroke="#fff" strokeWidth="1.800" />
    {busy && (
      <>
        <circle cx="20" cy="19" r="5" fill="#c4153a" stroke="#fff" />
        <path d="M17 19H23" stroke="#fff" strokeWidth="1.600" />
      </>
    )}
  </svg>
);

const Taskbar = () => (
  <div className="flex h-[37px] items-center overflow-hidden bg-[#1f2e42] pt-[2px] text-[12px] tracking-[-0.500px] whitespace-nowrap text-white">
    <div className="w-[61px] shrink-0 pl-[13px]">
      <svg width="16" height="16" viewBox="0 0 16 16" fill="#fff"><path d="M0 2.200L7 1.200V7.500H0ZM8 1L16 0V7.500H8ZM0 8.500H7V14.800L0 13.800ZM8 8.500H16V16L8 15Z" /></svg>
    </div>
    <div className="w-[47px] shrink-0">
      <svg width="17" height="16" viewBox="0 0 17 16" fill="none" stroke="#fff" strokeWidth="1.100"><path d="M.5 0V2.500H11.500V0M.5 5.500H11.500V10.500H.5ZM.5 16V13.500H11.500V16M15 0V3M15 8V16" /><path d="M13.500 4.500H16.500V7.500H13.500Z" fill="#fff" stroke="none" /></svg>
    </div>
    <div className="w-[48px] shrink-0">
      <svg width="25" height="25" viewBox="0 0 25 25">
        <defs>
          <linearGradient id="e1" x1="0" y1="0" x2="1" y2=".4"><stop offset="0" stopColor="#2aa5dc" /><stop offset=".5" stopColor="#35c1d8" /><stop offset="1" stopColor="#66e04c" /></linearGradient>
          <linearGradient id="e2" x1="0" y1="0" x2="1" y2="1"><stop offset="0" stopColor="#1b9de2" /><stop offset="1" stopColor="#114a8b" /></linearGradient>
        </defs>
        <circle cx="12" cy="12.500" r="12" fill="url(#e2)" />
        <path d="M.5 10C2 3 7 .5 12.500 .5C20 .5 24.500 6 24.300 11.500C24 16 19 17.500 15.500 16C14 15.500 15.500 14 15.500 12C15 7 5 5 .5 10Z" fill="url(#e1)" />
        <path d="M8 13C7.500 19 14 23 21 19.500C16 26 5 24.500 4.500 16C4.300 12 7 9.500 10 9.500C8.500 10.500 8 11.500 8 13Z" fill="#0d5ea8" />
        <path d="M15 13.500C14 15 14 16 16.500 17C19 18 22 17 23.500 15.500L22 19C16 21 11 18 11.500 13C12 10.500 15 11 15 13.500Z" fill="#1f2e42" />
      </svg>
    </div>
    <div className="flex w-[151px] shrink-0 items-center">
      <svg width="22" height="16" viewBox="0 0 22 16" className="mr-[5px]"><rect x=".5" y=".5" width="21" height="15" fill="#1ea0ff" stroke="#1272b8" /><path d="M1 15L21 1V13H1Z" fill="#38acff" /><path d="M1 14H21" stroke="#b8dcf5" /></svg>
      Área de Trabalho
    </div>
    <div className="flex w-[150px] shrink-0 items-center pl-[1px]">
      <svg width="14" height="20" viewBox="0 0 14 20" className="mr-[11px]"><path d="M0 2H5L7 0H13V17H0Z" fill="#e0b85a" /><path d="M4 4H13V18H4Z" fill="#f7dd94" /><path d="M0 1L5 4V20L0 17Z" fill="#fbe7a8" /></svg>
      <span className="tracking-[-0.450px]">Relatórios</span>
    </div>
    <div className="flex w-[92px] shrink-0 items-center gap-6">
      <svg width="24" height="24" viewBox="0 0 24 24"><path d="M1 1H18V7H8V20L1 17Z" fill="#2a70b8" /><path d="M2 2H17L6 5V18Z" fill="#7fb6e2" /><path d="M5 7H14V10Q18 8 17 3L22 1Q24 8 20 15Q16 21 8 21V23L5 19Z" fill="#f5a80c" /><path d="M6 8H12L14 12Q19 10 21 3Q23 15 8 18Z" fill="#ffd24a" /></svg>
      <svg width="24" height="24" viewBox="0 0 24 24" fill="none"><path d="M0 3V15C0 18 13 18 13 15V3Z" fill="#f2a91c" /><ellipse cx="6.500" cy="3.500" rx="6.500" ry="2.500" fill="#ffd866" /><path d="M17 1.500H22.500V8M1 17V22.500H7" stroke="#3ba53b" strokeWidth="1.500" /><path d="M12 22L20 13M12.500 13.500L20 22M19.500 10.500Q18 14 21 14L23 13M12 23L14.500 20M18 20L21 23M8 17Q11 13 14 16" stroke="#b8bcc0" strokeWidth="1.600" /></svg>
    </div>
    <div className="flex w-[150px] shrink-0 items-center pl-[3px]"><Teams busy /><span className="ml-[3px] tracking-[-0.450px]">Calendário | Micr...</span></div>
    <div className="flex w-[153px] shrink-0 items-center pl-[3px]"><Teams /><span className="ml-[3px] tracking-[-0.300px]">WilsonSons Pow...</span></div>
    <div className="flex w-[140px] shrink-0 items-center">
      <svg width="24" height="24" viewBox="0 0 24 24" className="mr-[4px]"><path d="M7 2L22 4V22L17 21Z" fill="#6e5a3c" /><path d="M7 2L21 4L17 22L1 18Z" fill="#6fb9c8" /><path d="M7 2L14 3L9 20L1 18Z" fill="#b5e0e8" /><path d="M1 18L17 20V23L3 20Z" fill="#eef7f8" /></svg>
      <span className="tracking-[-0.250px]">09-12-2020 - Bloc...</span>
    </div>
    <div className="-mt-[2px] flex h-[37px] w-[149px] shrink-0 items-center bg-[#4d5967] pt-[2px] pl-[12px]">
      <svg width="20" height="24" viewBox="0 0 20 24" className="mr-[6px]"><rect x="11" width="8" height="24" rx=".8" fill="#d99a0c" /><rect x="6" y="6" width="8" height="18" rx=".8" fill="#f0c52c" /><rect y="12" width="9" height="12" rx=".8" fill="#f8dd78" /></svg>
      <span className="tracking-[-0.270px]">05 - Importando ...</span>
    </div>
    <svg width="97" height="36" viewBox="1144 729 97 36" fill="none" stroke="#fff" strokeWidth="1.200" className="-mt-[2px] shrink-0">
      <path d="M1153 751L1159 745L1165 751" />
      <rect x="1180" y="740" width="5" height="10" rx="1" fill="#fff" />
      <path d="M1177.500 747V750Q1178 753 1182.500 753Q1187 753 1187.500 750V747M1182.500 753V755.500M1179.500 755.500H1185.500" />
      <path d="M1203 742.500H1214.500V751.500H1202.500V746M1199.500 741.500H1203V745.500H1199.500ZM1201 746V754.500M1205 754.500H1213M1208.500 752V754.500" />
      <path d="M1223.500 746V751H1226L1229.500 754V743L1226 746ZM1232 746Q1233.500 748.500 1232 751M1234.500 744Q1237 748.500 1234.500 753M1237 742Q1240.500 748.500 1237 755" />
    </svg>
    <div className="w-[74px] shrink-0 text-center leading-[17.500px] tracking-[-0.500px]">
      <div>09:13</div>
      <div>09/12/2020</div>
    </div>
    <svg width="17" height="17" viewBox="0 0 17 17" className="ml-[10px] shrink-0"><path d="M0 0H16V13H6L3.500 15.500V13H0Z" fill="#fff" /><path d="M3 3.500H13M3 6.500H13M3 9.500H9" stroke="#1f2e42" /><path d="M8 14L13 8Q17 7 16 11L13 16H9Z" fill="#fff" stroke="#1f2e42" strokeWidth=".6" /><path d="M9.500 13.500L13.500 9.500M11.500 15L15 11" stroke="#1f2e42" strokeWidth=".8" /></svg>
    <div className="-mt-[2px] ml-[19px] h-[37px] w-px shrink-0 bg-[#6a7583]" />
  </div>
);

const Annotations = () => (
  <svg width="220" height="80" viewBox="30 100 220 80" className="pointer-events-none absolute top-[97px] left-[27px]" fill="none" stroke="#0000ff">
    <ellipse cx="121" cy="133" rx="77" ry="16.500" strokeWidth="2.600" />
    <path d="M240 168.500L200 150.500" strokeWidth="3" />
    <path d="M193.500 147L205.500 148L201.500 155.500Z" fill="#0000ff" />
  </svg>
);

export default function App() {
  return (
    <div className={`${UI} relative flex h-[768px] w-[1366px] flex-col overflow-hidden border-3 border-[#d91122] bg-[#f3f2f1]`}>
      <TitleBar />
      <Ribbon />
      <div className="flex h-[542px]">
        <LeftRail />
        <div className="flex flex-col">
          <div className="flex">
            <Canvas />
            <FilterPane />
          </div>
          <PageTabs />
        </div>
        <VisualPane />
        <FieldsPane />
      </div>
      <div className="h-6 border-t border-[#dddbd9] pl-[2px] text-[12px] leading-[22px] tracking-[-0.330px] text-[#484644]">Página 2 de 2</div>
      <Taskbar />
      <Annotations />
    </div>
  );
}
